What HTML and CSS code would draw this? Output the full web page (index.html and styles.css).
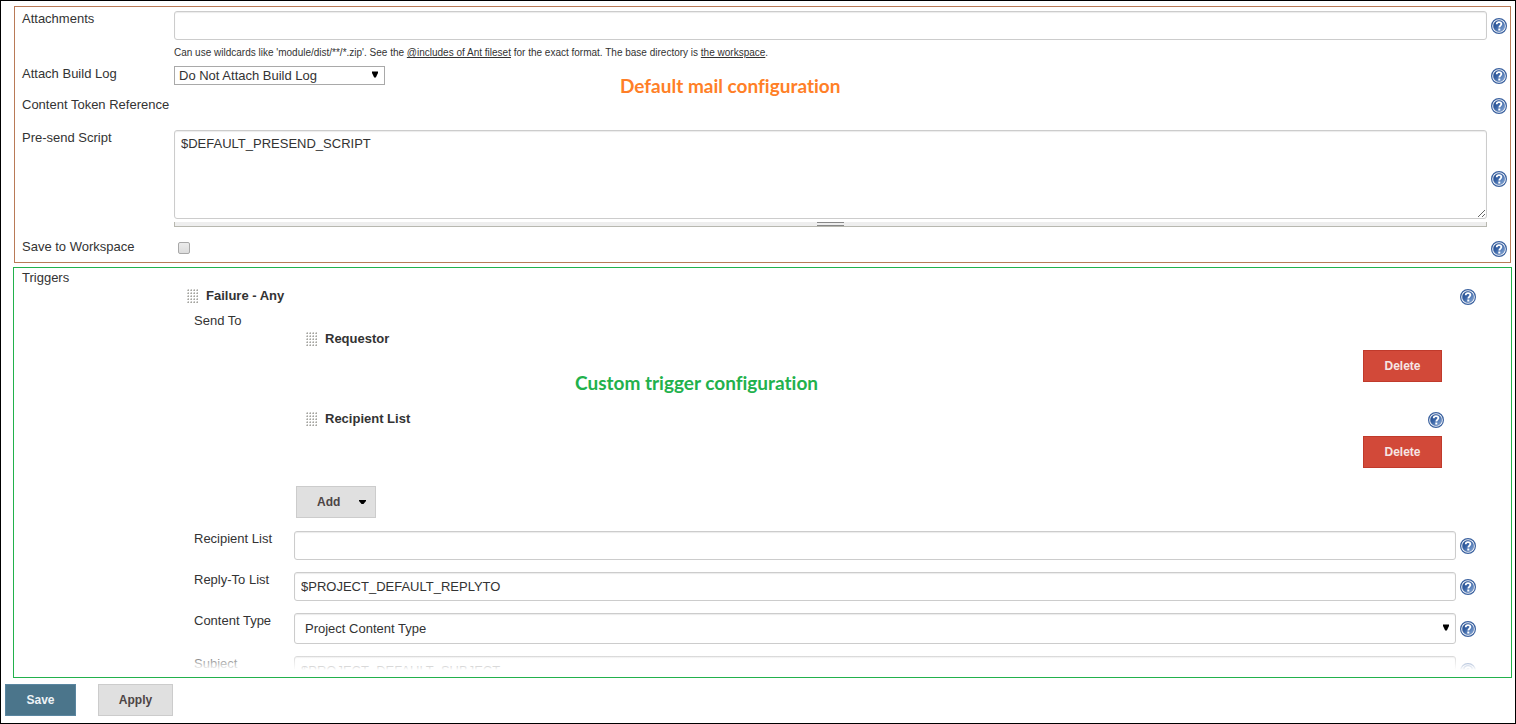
FILE: index.html
```html
<!DOCTYPE html>
<html lang="en">
<head>
<meta charset="utf-8">
<title>Editable Email Notification</title>
<link rel="stylesheet" href="styles.css">
</head>
<body>
<svg class="defs" aria-hidden="true">
  <defs>
    <linearGradient id="disc" x1="0" y1="0" x2="1" y2="1">
      <stop offset="0" stop-color="#1f4687"/>
      <stop offset="0.4" stop-color="#3560a3"/>
      <stop offset="1" stop-color="#8fb0dc"/>
    </linearGradient>
    <symbol id="help" viewBox="0 0 16 16">
      <circle cx="8" cy="8" r="7.4" fill="#fff" stroke="#3a619f" stroke-width="1.2"/>
      <circle cx="8" cy="8" r="5.7" fill="url(#disc)" stroke="#3a619f" stroke-width="0.4"/>
      <path d="M5.700 6.300C5.700 4.700 6.700 4.100 8 4.100s2.400.7 2.400 2C10.400 7.500 8.300 7.700 8.300 9.500" fill="none" stroke="#fff" stroke-width="1.8"/>
      <rect x="7.300" y="10.500" width="2" height="2" fill="#fff"/>
    </symbol>
    <pattern id="dots" width="3" height="3" patternUnits="userSpaceOnUse">
      <rect width="2" height="2" fill="#c4c4c0"/>
      <rect width="1" height="1" fill="#ececec"/>
      <rect x="1" y="1" width="1" height="1" fill="#a4a4a0"/>
    </pattern>
    <symbol id="grip" viewBox="0 0 11 14"><rect width="11" height="14" fill="url(#dots)"/></symbol>
    <symbol id="arrow" viewBox="0 0 6 7"><path d="M0 0.500H6V2L3.800 6.500H2.200L0 2Z" fill="#000"/></symbol>
  </defs>
</svg>
<form class="page">
  <section class="panel mail">
    <div class="row">
      <label for="attachments">Attachments</label>
      <input class="text" id="attachments" type="text">
      <button class="help" type="button" aria-label="Help for Attachments"><svg><use href="#help"/></svg></button>
    </div>
    <p class="hint">Can use wildcards like 'module/dist/**/*.zip'. See the <a href="#">@includes of Ant fileset</a> for the exact format. The base directory is <a href="#">the workspace</a>.</p>
    <div class="row log-row">
      <label for="log">Attach Build Log</label>
      <div class="select small">
        <select id="log"><option>Do Not Attach Build Log</option></select>
        <svg><use href="#arrow"/></svg>
      </div>
      <button class="help" type="button" aria-label="Help for Attach Build Log"><svg><use href="#help"/></svg></button>
    </div>
    <div class="row token-row">
      <span class="label">Content Token Reference</span>
      <span></span>
      <button class="help" type="button" aria-label="Help for Content Token Reference"><svg><use href="#help"/></svg></button>
    </div>
    <div class="row script-row">
      <label for="script">Pre-send Script</label>
      <div class="script">
        <textarea id="script">$DEFAULT_PRESEND_SCRIPT</textarea>
        <div class="handle"><span></span></div>
      </div>
      <button class="help" type="button" aria-label="Help for Pre-send Script"><svg><use href="#help"/></svg></button>
    </div>
    <div class="row save-row">
      <label for="save">Save to Workspace</label>
      <input class="check" id="save" type="checkbox">
      <button class="help" type="button" aria-label="Help for Save to Workspace"><svg><use href="#help"/></svg></button>
    </div>
    <strong class="note note-mail">Default mail configuration</strong>
  </section>

  <section class="panel triggers">
    <span class="label">Triggers</span>
    <div class="trigger">
      <div class="title">
        <svg class="grip"><use href="#grip"/></svg>
        <b>Failure - Any</b>
        <button class="help" type="button" aria-label="Help for Failure - Any"><svg><use href="#help"/></svg></button>
      </div>
      <div class="trigger-body">
        <span class="label">Send To</span>
        <div class="recipients">
          <div class="title"><svg class="grip"><use href="#grip"/></svg><b>Requestor</b></div>
          <button class="btn delete" type="button">Delete</button>
          <div class="title second">
            <svg class="grip"><use href="#grip"/></svg>
            <b>Recipient List</b>
            <button class="help" type="button" aria-label="Help for recipients"><svg><use href="#help"/></svg></button>
          </div>
          <button class="btn delete far" type="button">Delete</button>
        </div>
        <button class="btn add" type="button">Add <svg viewBox="0 0 7 4"><path d="M0 0H7V1L4.500 4H2.500L0 1Z"/></svg></button>
        <div class="row">
          <label for="rcpt">Recipient List</label>
          <input class="text" id="rcpt" type="text">
          <button class="help" type="button" aria-label="Help for Recipient List"><svg><use href="#help"/></svg></button>
        </div>
        <div class="row">
          <label for="reply">Reply-To List</label>
          <input class="text" id="reply" type="text" value="$PROJECT_DEFAULT_REPLYTO">
          <button class="help" type="button" aria-label="Help for Reply-To List"><svg><use href="#help"/></svg></button>
        </div>
        <div class="row">
          <label for="type">Content Type</label>
          <div class="select">
            <select id="type"><option>Project Content Type</option></select>
            <svg><use href="#arrow"/></svg>
          </div>
          <button class="help" type="button" aria-label="Help for Content Type"><svg><use href="#help"/></svg></button>
        </div>
        <div class="row">
          <label for="subject">Subject</label>
          <input class="text" id="subject" type="text" value="$PROJECT_DEFAULT_SUBJECT">
          <button class="help" type="button" aria-label="Help for Subject"><svg><use href="#help"/></svg></button>
        </div>
      </div>
    </div>
    <strong class="note note-trigger">Custom trigger configuration</strong>
    <div class="fade"></div>
  </section>

  <footer class="actions">
    <button class="btn save" type="submit">Save</button>
    <button class="btn apply" type="button">Apply</button>
  </footer>
</form>
</body>
</html>
```
FILE: styles.css
```css
* { box-sizing: border-box; }
body {
  margin: 0;
  background: #fff;
  color: #333;
  font: 13px/16px "Liberation Sans", Arial, sans-serif;
}
input, select, textarea, button { font: inherit; color: inherit; margin: 0; }
.defs { position: absolute; width: 0; height: 0; }

.page {
  height: 100vh;
  display: flex;
  flex-direction: column;
  border: 1px solid #000;
  padding: 5px 3px 7px 4px;
}
.panel { position: relative; border: 1px solid; }
.mail {
  margin: 0 1px 4px 9px;
  padding: 4px 3px 3px 7px;
  border-color: #b97a57;
}
.row {
  display: grid;
  grid-template-columns: 152px 1fr 16px;
  align-items: start;
  padding-right: 4px;
}
.row .help { margin-left: 4px; align-self: center; }

.help {
  display: block;
  width: 16px;
  height: 16px;
  padding: 0;
  border: 0;
  background: none;
}
.help svg { display: block; width: 16px; height: 16px; }

.text, .select select, textarea {
  display: block;
  width: 100%;
  border: 1px solid #ccc;
  border-radius: 3px;
  background: #fff;
  box-shadow: inset 0 1px 1px rgba(0, 0, 0, 0.08);
}
.text { height: 29px; padding: 0 6px; }
.hint {
  margin: 7px 0 7px 152px;
  font-size: 10px;
  line-height: 12px;
}
.hint a { color: inherit; }

.select { position: relative; }
.select select { height: 31px; padding: 0 24px 0 10px; appearance: none; }
.select svg { position: absolute; right: 7px; top: 11px; width: 6px; height: 7px; pointer-events: none; }
.small { width: 211px; }
.small select {
  height: 19px;
  padding: 0 20px 0 4px;
  border-color: #a9a9a9;
  border-radius: 0;
  box-shadow: none;
}
.small svg { top: 5px; }
.log-row { min-height: 19px; }
.token-row { margin-top: 12px; min-height: 17px; }
.script-row { margin-top: 16px; }
textarea { height: 89px; padding: 5px 6px; resize: vertical; }
.handle {
  height: 5px;
  margin-top: 3px;
  border: 1px solid #b8b8b0;
  border-top: 0;
  background: #eee;
}
.handle span {
  display: block;
  width: 27px;
  height: 4px;
  margin: 0 auto;
  border: 1px solid #888;
  border-width: 1px 0;
}
.save-row { margin-top: 12px; min-height: 20px; }
.check {
  appearance: none;
  width: 12px;
  height: 12px;
  margin: 3px 4px;
  border: 1px solid #a8a8a8;
  border-radius: 2px;
  background: linear-gradient(#ececec, #dcdcdc);
}

.triggers {
  flex: 1;
  min-height: 0;
  margin-left: 8px;
  padding: 2px 35px 0 8px;
  overflow: hidden;
  border-color: #22b14c;
  display: grid;
  grid-template-columns: 165px 1fr;
  align-items: start;
}
.trigger { padding-top: 18px; }
.title { display: flex; align-items: center; height: 16px; }
.title .help { margin: 2px 0 0 auto; }
.grip { width: 11px; height: 14px; margin-right: 8px; }
.trigger-body { padding: 9px 0 0 7px; }
.trigger-body > .label { display: block; }
.trigger-body .row { grid-template-columns: 100px 1fr 16px; margin-bottom: 12px; }
.recipients {
  margin: 2px 32px 0 112px;
  display: flex;
  flex-direction: column;
}
.title.second { margin-top: 29px; }
.btn {
  height: 32px;
  padding: 0;
  border: 1px solid #ccc;
  background: #e0e0e0;
  color: #4d4545;
  font-size: 12px;
  font-weight: bold;
}
.delete {
  align-self: flex-end;
  width: 79px;
  margin: 3px 2px 0 0;
  border-color: #c03a2b;
  background: #d24939;
  color: #f6e6e4;
}
.delete.far { margin-top: 9px; }
.add {
  display: flex;
  align-items: center;
  gap: 19px;
  width: 80px;
  margin: 18px 0 13px 102px;
  padding: 0 8px 0 20px;
}
.add svg { width: 7px; height: 4px; flex: none; fill: #000; }

.note {
  position: absolute;
  font: bold 19px/24px Lato, "Open Sans", sans-serif;
  font-variant-ligatures: none;
}
.note-mail { left: 605px; top: 67px; color: #ff7f27; }
.note-trigger { left: 561px; top: 103px; color: #22b14c; }
.fade {
  position: absolute;
  inset: auto 0 0 0;
  height: 26px;
  background: linear-gradient(rgba(255, 255, 255, 0), #fff 19px);
}

.actions { display: flex; gap: 22px; margin-top: 6px; }
.save { width: 71px; border-color: #5a86a0; background: #4b758b; color: #eef3f6; }
.apply { width: 75px; }
```
